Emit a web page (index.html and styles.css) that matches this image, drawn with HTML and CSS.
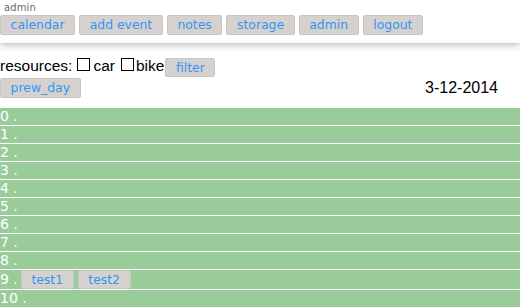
FILE: index.html
```html
<!DOCTYPE html>
<html>
<head>
<meta charset="utf-8">
<link rel="stylesheet" href="styles.css">
</head>
<body>
<div class="topbar">
  <div class="user">admin</div>
  <nav class="menu">
    <span class="btn">calendar</span>
    <span class="btn">add event</span>
    <span class="btn">notes</span>
    <span class="btn">storage</span>
    <span class="btn">admin</span>
    <span class="btn">logout</span>
  </nav>
</div>
<div class="content">
  <div class="filters">
    <span class="lbl">resources:</span>
    <span class="box first"></span><span class="lbl">car</span>
    <span class="box second"></span><span class="lbl">bike</span>
    <span class="btn small">filter</span>
  </div>
  <div class="dayline">
    <span class="btn">prew_day</span>
    <span class="date">3-12-2014</span>
  </div>
</div>
<div class="grid">
  <div class="row">0 .</div>
  <div class="row">1 .</div>
  <div class="row">2 .</div>
  <div class="row">3 .</div>
  <div class="row">4 .</div>
  <div class="row">5 .</div>
  <div class="row">6 .</div>
  <div class="row">7 .</div>
  <div class="row">8 .</div>
  <div class="row"><span>9 .</span><span class="events"><span class="btn ev">test1</span><span class="btn ev">test2</span></span></div>
  <div class="row">10 .</div>
</div>
</body>
</html>
```
FILE: styles.css
```css
html, body {
  margin: 0;
  padding: 0;
  background: #fff;
  overflow: hidden;
}
body {
  font-family: "DejaVu Sans", sans-serif;
}
.topbar {
  height: 43px;
  box-shadow: 0 2px 7px rgba(0, 0, 0, 0.28);
  position: relative;
  z-index: 1;
  background: #fff;
}
.user {
  font-size: 10px;
  color: #6a6a6a;
  padding: 2px 0 0 4px;
  height: 13px;
  line-height: 12px;
  letter-spacing: 0.1px;
}
.menu {
  display: flex;
  gap: 4px;
}
.btn {
  display: inline-block;
  box-sizing: border-box;
  height: 20px;
  padding: 0 9.6px;
  font-family: "DejaVu Sans", sans-serif;
  font-size: 12.4px;
  line-height: 18px;
  color: #3395f4;
  background: #d5d1ce;
  border: 1px solid #c9c5c1;
  border-radius: 2px;
  white-space: nowrap;
}
.content {
  padding-top: 15px;
}
.filters {
  display: flex;
  align-items: flex-start;
  height: 20px;
}
.lbl {
  font-family: "Liberation Sans", Arial, sans-serif;
  font-size: 15.5px;
  color: #000;
  line-height: 16px;
}
.box {
  display: inline-block;
  box-sizing: border-box;
  width: 13px;
  height: 13px;
  border: 1px solid #000;
  margin-top: 0;
}
.box.first {
  margin-left: 5px;
  margin-right: 3px;
}
.box.second {
  margin-left: 6px;
  margin-right: 2px;
}
.btn.small {
  height: 19px;
  line-height: 17px;
  margin-left: 1px;
}
.dayline {
  display: flex;
  justify-content: space-between;
  align-items: flex-start;
  padding-right: 22px;
}
.date {
  font-family: "Liberation Sans", Arial, sans-serif;
  font-size: 16px;
  line-height: 18px;
  color: #000;
  margin-top: 1px;
}
.grid {
  margin-top: 10px;
}
.row {
  display: flex;
  align-items: center;
  min-height: 17px;
  line-height: 17px;
  background: #99cc99;
  color: #fff;
  font-size: 14px;
  border-bottom: 1px solid #fff;
  white-space: pre;
}
.events {
  display: flex;
  gap: 4px;
  margin-left: 3px;
}
.row .ev {
  height: 19px;
  line-height: 17px;
}
```
